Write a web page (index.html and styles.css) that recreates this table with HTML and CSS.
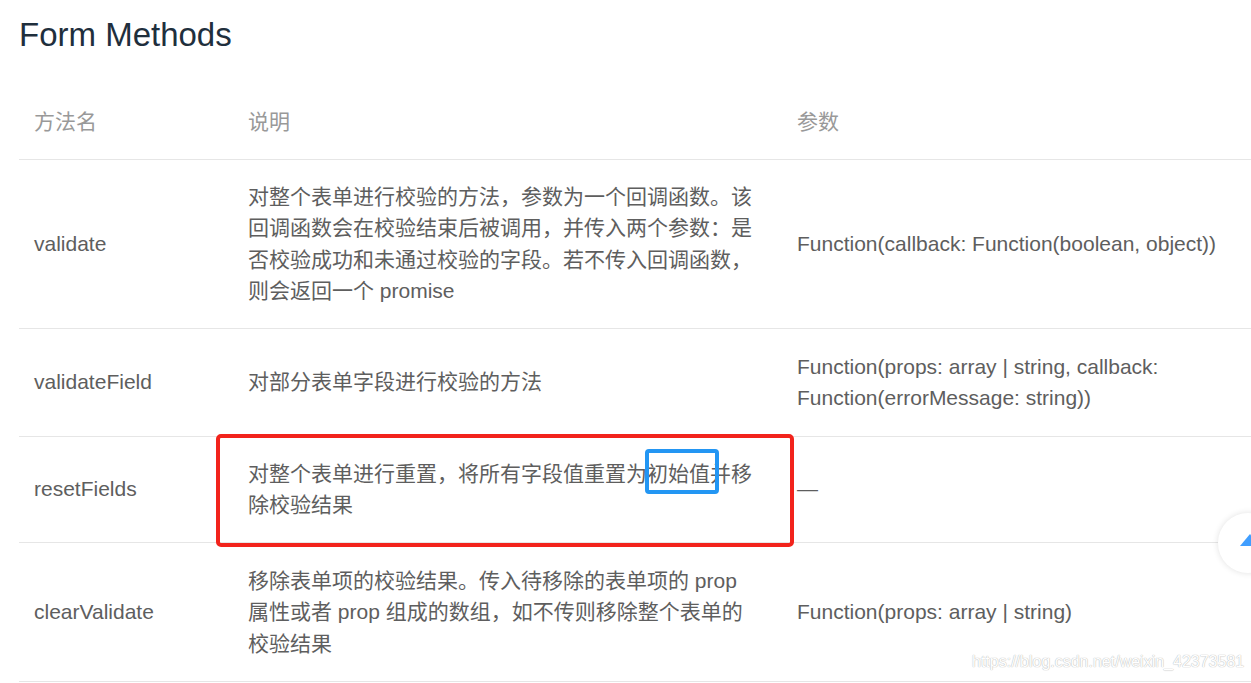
FILE: index.html
```html
<!DOCTYPE html>
<html lang="zh-CN">
<head>
  <meta charset="UTF-8" />
  <meta name="viewport" content="width=device-width, initial-scale=1.0" />
  <title>Form Methods</title>
  <link rel="stylesheet" href="styles.css">
</head>
<body>
  <div class="page">
    <h3 class="title">Form Methods</h3>

    <table class="api-table">
      <colgroup>
        <col class="col-name" />
        <col class="col-desc" />
        <col class="col-args" />
      </colgroup>
      <thead>
        <tr>
          <th>方法名</th>
          <th>说明</th>
          <th>参数</th>
        </tr>
      </thead>
      <tbody>
        <tr>
          <td>validate</td>
          <td>对整个表单进行校验的方法，参数为一个回调函数。该回调函数会在校验结束后被调用，并传入两个参数：是否校验成功和未通过校验的字段。若不传入回调函数，则会返回一个 promise</td>
          <td>Function(callback: Function(boolean, object))</td>
        </tr>
        <tr class="row-tall">
          <td>validateField</td>
          <td>对部分表单字段进行校验的方法</td>
          <td>Function(props: array | string, callback: Function(errorMessage: string))</td>
        </tr>
        <tr>
          <td>resetFields</td>
          <td>对整个表单进行重置，将所有字段值重置为初始值并移除校验结果</td>
          <td>—</td>
        </tr>
        <tr class="row-tall">
          <td>clearValidate</td>
          <td>移除表单项的校验结果。传入待移除的表单项的 prop 属性或者 prop 组成的数组，如不传则移除整个表单的校验结果</td>
          <td>Function(props: array | string)</td>
        </tr>
      </tbody>
    </table>

    <!-- Markierungen aus dem Screenshot -->
    <div class="mark mark-red"></div>
    <div class="mark mark-blue"></div>

    <div class="backtop">
      <svg width="60" height="60" viewBox="0 0 60 60">
        <polygon points="32,21 22,33 42,33" fill="#409eff" />
      </svg>
    </div>

    <div class="watermark">https://blog.csdn.net/weixin_42373581</div>
  </div>
</body>
</html>
```

FILE: styles.css
```css
html, body {
  margin: 0;
  padding: 0;
  background-color: #fff;
  overflow: hidden;
}

body {
  font-family: "Liberation Sans", "Noto Sans CJK SC", sans-serif;
  width: 1251px;
  height: 683px;
}

.page {
  position: relative;
  padding-left: 19px;
  height: 683px;
}

.title {
  margin: 0;
  padding-top: 16px;
  font-size: 33px;
  line-height: 38px;
  font-weight: 400;
  color: #1f2f3d;
}

.api-table {
  margin-top: 31px;
  border-collapse: collapse;
  table-layout: fixed;
  width: 1283px;
  font-size: 21px;
  line-height: 31.5px;
}

.col-name { width: 214px; }
.col-desc { width: 549px; }
.col-args { width: 520px; }

.api-table th,
.api-table td {
  text-align: left;
  vertical-align: middle;
  padding: 21px 28px 21px 15px;
  border-bottom: 1px solid #e6e6e6;
}

.api-table .row-tall td {
  padding-top: 22px;
  padding-bottom: 22px;
}

.api-table th {
  font-weight: 400;
  color: #999;
}

.api-table td {
  color: #5e5e5e;
}

.mark {
  position: absolute;
  box-sizing: border-box;
}

.mark-red {
  left: 216px;
  top: 434px;
  width: 578px;
  height: 113px;
  border: 4px solid #f2231c;
  border-radius: 5px;
}

.mark-blue {
  left: 645px;
  top: 449px;
  width: 74px;
  height: 45px;
  border: 4px solid #2396f3;
  border-radius: 4px;
}

.backtop {
  position: absolute;
  left: 1218px;
  top: 513px;
  width: 60px;
  height: 60px;
  border-radius: 50%;
  background-color: #fff;
  box-shadow: 0 0 6px rgba(0, 0, 0, 0.12);
}

.backtop svg {
  display: block;
}

.watermark {
  position: absolute;
  left: 972px;
  top: 653px;
  font-size: 16px;
  color: #fff;
  text-shadow: 0 0 1px #bbb, 0 0 1px #bbb;
  white-space: nowrap;
}
```
